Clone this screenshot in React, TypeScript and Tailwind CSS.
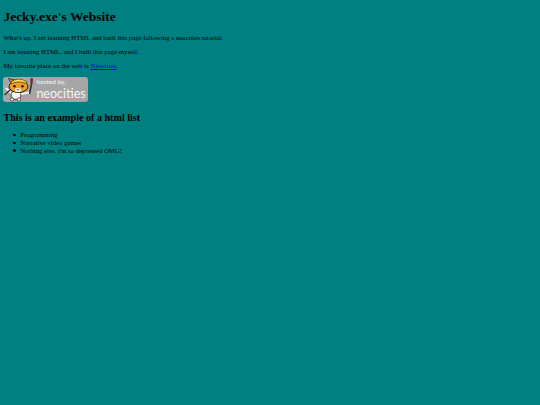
// Neocities starter page, rendered at the small scale of the screenshot
const listItems = ["Programming", "Narrative video games", "Nothing else, i'm so depressed OMG!"];

function NeocitiesBadge() {
  return (
    <div className="flex h-[25.3px] w-[84.4px] items-center rounded-[3px] bg-[#a6a6a6]">
      <svg className="h-[25px] w-[33px] shrink-0" viewBox="0 0 33 25">
        {/* paintbrush */}
        <path d="M28.5 7 L26.5 17" stroke="#2e2e2e" strokeWidth="1.5" />
        <path d="M27.5 1 L30 1.5 L29.5 7.5 L27.5 7 Z" fill="#6e2a26" />
        {/* wrench and arms */}
        <path d="M3 11 L10 18" stroke="#f4f4f4" strokeWidth="2.2" />
        <path d="M1.5 18 L7 13" stroke="#2e2e2e" strokeWidth="1.3" />
        {/* body */}
        <ellipse cx="13" cy="18" rx="5" ry="4.5" fill="#f7f7f2" stroke="#2e2e2e" strokeWidth="0.9" />
        <circle cx="9" cy="22.5" r="1.7" fill="#f7f7f2" stroke="#2e2e2e" strokeWidth="0.7" />
        <circle cx="16" cy="22.5" r="1.7" fill="#f7f7f2" stroke="#2e2e2e" strokeWidth="0.7" />
        <path d="M18 17 L26 15.5" stroke="#f4f4f4" strokeWidth="2" />
        {/* head */}
        <ellipse cx="15.5" cy="9.5" rx="9.5" ry="6" fill="#ee9a22" stroke="#33230f" strokeWidth="1" />
        <path d="M7.5 5 L5.5 1.5 L12 3 Z" fill="#ee9a22" stroke="#33230f" strokeWidth="0.8" />
        <path d="M8 5 Q15 -0.5 23.5 4.5 L23.5 6.5 Q15 3 8 7 Z" fill="#f7dc55" stroke="#33230f" strokeWidth="0.6" />
        <ellipse cx="15" cy="13" rx="3.2" ry="2" fill="#fdf5df" />
        <circle cx="11.5" cy="9.3" r="1.2" fill="#161616" />
        <circle cx="19.5" cy="9.3" r="1.2" fill="#161616" />
        <path d="M13.8 12.3 Q15 13.8 16.4 12.3" stroke="#33230f" strokeWidth="0.8" fill="none" />
      </svg>
      <div className="flex flex-col font-['Lato',sans-serif] text-[#f5f5f5]">
        <span className="text-[6.5px] leading-[8px]">hosted by,</span>
        <span className="text-[12.5px] leading-[15px]">neocities</span>
      </div>
    </div>
  );
}

export default function App() {
  return (
    <div className="min-h-[405px] bg-[#008080] px-[3.4px] font-['Liberation_Serif',serif] text-[6.75px] leading-[7.6px] text-black">
      <h1 className="pt-[9px] text-[13.5px] font-bold leading-[15.6px]">Jecky.exe's Website</h1>
      <p className="mt-[9px]">What's up, I am learning HTML and built this page following a neocities tutorial.</p>
      <p className="mt-[6.75px]">I am learning HTML, and I built this page myself.</p>
      <p className="mt-[6.75px]">
        My favorite place on the web is <a href="#" className="text-[#0000ee] underline">Neocities</a>.
      </p>
      <div className="mt-[6.75px]">
        <NeocitiesBadge />
      </div>
      <h2 className="mt-[9.6px] text-[10.125px] font-bold leading-[11.5px]">This is an example of a html list</h2>
      <ul className="mt-[8.4px] flex flex-col pl-[10px]">
        {listItems.map((item) => (
          <li key={item} className="flex items-center gap-[4.6px]">
            <span className="h-[2.3px] w-[2.3px] shrink-0 rounded-full bg-black" />
            {item}
          </li>
        ))}
      </ul>
    </div>
  );
}
